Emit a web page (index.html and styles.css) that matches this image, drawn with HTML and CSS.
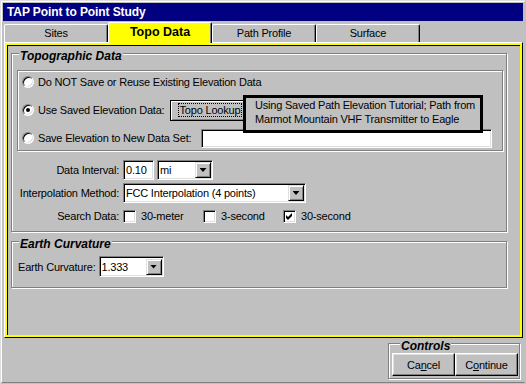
FILE: index.html
```html
<!DOCTYPE html>
<html lang="en">
<head>
  <meta charset="UTF-8">
  <meta name="viewport" content="width=device-width, initial-scale=1.0">
  <title>TAP Point to Point Study</title>
  <link rel="stylesheet" href="styles.css">
</head>
<body>
  <div class="window">
    <div class="window-in">
      <div class="titlebar">TAP Point to Point Study</div>

      <div class="tabs">
        <div class="tab">Sites</div>
        <div class="tab active">Topo Data</div>
        <div class="tab">Path Profile</div>
        <div class="tab">Surface</div>
      </div>

      <div class="panel">
        <div class="panel-body">
          <div class="group topo">
            <div class="group-title">Topographic Data</div>

            <div class="group options">
              <div class="option">
                <span class="radio"></span>
                <span>Do NOT Save or Reuse Existing Elevation Data</span>
              </div>
              <div class="option">
                <span class="radio checked"></span>
                <span>Use Saved Elevation Data:</span>
                <button class="btn default lookup"><span class="focus">Topo Lookup</span></button>
              </div>
              <div class="option">
                <span class="radio"></span>
                <span>Save Elevation to New Data Set:</span>
                <span class="field dataset"></span>
              </div>
              <div class="note">Using Saved Path Elevation Tutorial; Path from<br>Marmot Mountain VHF Transmitter to Eagle</div>
            </div>

            <div class="settings">
              <label>Data Interval:</label>
              <div class="row">
                <span class="field interval"><span class="text">0.10</span></span>
                <span class="field unit"><span class="text">mi</span><span class="drop"></span></span>
              </div>

              <label>Interpolation Method:</label>
              <span class="field method"><span class="text">FCC Interpolation (4 points)</span><span class="drop"></span></span>

              <label>Search Data:</label>
              <div class="row checks">
                <span class="check"><span class="box"></span>30-meter</span>
                <span class="check"><span class="box"></span>3-second</span>
                <span class="check"><span class="box"><svg width="7" height="7" viewBox="0 0 7 7"><polygon points="0,2 2,4 6,0 6,3 2,7 0,5" fill="#000"/></svg></span>30-second</span>
              </div>
            </div>
          </div>

          <div class="group earth">
            <div class="group-title">Earth Curvature</div>
            <div class="curve-row">
              <label>Earth Curvature:</label>
              <span class="field curve"><span class="text">1.333</span><span class="drop"></span></span>
            </div>
          </div>
        </div>
      </div>

      <div class="footer">
        <div class="group controls">
          <div class="group-title">Controls</div>
          <div class="buttons">
            <button class="btn">Ca<u>n</u>cel</button>
            <button class="btn">C<u>o</u>ntinue</button>
          </div>
        </div>
      </div>
    </div>
  </div>
</body>
</html>
```

FILE: styles.css
```css
body {
  margin: 0;
  background: #c0c0c0;
  font-family: "Liberation Sans", Arial, sans-serif;
  font-size: 11px;
  letter-spacing: -0.2px;
  color: #000;
}
.window {
  width: 526px;
  height: 384px;
  box-sizing: border-box;
  border: 1px solid;
  border-color: #dfdfdf #c0c0c0 #c0c0c0 #dfdfdf;
}
.window-in {
  height: 100%;
  box-sizing: border-box;
  border: 1px solid;
  border-color: #fff #c0c0c0 #808080 #fff;
  padding: 1px;
}
.titlebar {
  height: 18px;
  line-height: 18px;
  padding-left: 4px;
  background: #000080;
  color: #fff;
  font-weight: bold;
  font-size: 12px;
  letter-spacing: -0.1px;
}

/* tabs */
.tabs {
  display: flex;
  align-items: flex-end;
  height: 20px;
  margin-top: 1px;
  padding-left: 1px;
}
.tab {
  width: 104px;
  height: 18px;
  box-sizing: border-box;
  border-top: 1px solid #fff;
  border-left: 1px solid #fff;
  border-right: 1px solid #000;
  border-radius: 2px 2px 0 0;
  box-shadow: inset -1px 0 #808080;
  text-align: center;
  line-height: 17px;
}
.tab.active {
  position: relative;
  height: 21px;
  margin-bottom: -1px;
  background: #ff0;
  font-weight: bold;
  font-size: 12.5px;
  letter-spacing: 0;
  line-height: 19px;
}

/* panel */
.panel {
  height: 296px;
  box-sizing: border-box;
  margin-left: 1px;
  border: 1px solid;
  border-color: #fff #000 #000 #fff;
}
.panel-body {
  height: 100%;
  box-sizing: border-box;
  border: 2px solid #ff0;
  box-shadow: inset 1px 1px #000;
  padding: 8px 13px 0 4px;
}

/* group boxes */
.group {
  border: 1px solid #808080;
  box-shadow: inset 1px 1px #fff, 1px 1px #fff;
}
.group-title {
  width: fit-content;
  margin: -5px 0 0 7px;
  padding: 0 1px;
  background: #c0c0c0;
  font-style: italic;
  font-weight: bold;
  font-size: 12px;
  line-height: 14px;
  letter-spacing: 0;
}
.options {
  position: relative;
  display: flex;
  flex-direction: column;
  gap: 10px;
  margin: 7px 3px 0 5px;
  padding: 2px 0 3px 4px;
}
.option {
  display: flex;
  align-items: center;
  gap: 4px;
  height: 18px;
  white-space: nowrap;
}
.note {
  position: absolute;
  left: 225px;
  top: 24px;
  width: 240px;
  height: 38px;
  box-sizing: border-box;
  border: 3px solid #000;
  background: #c0c0c0;
  padding-left: 9px;
  line-height: 14px;
}

/* controls */
.radio {
  position: relative;
  flex: none;
  width: 12px;
  height: 12px;
  box-sizing: border-box;
  border-radius: 50%;
  background: #fff;
  border: 1px solid;
  border-color: #808080 #fff #fff #808080;
  box-shadow: inset 1px 1px #000, inset -1px -1px #dfdfdf;
}
.radio.checked::after {
  content: "";
  position: absolute;
  left: 3px;
  top: 3px;
  width: 4px;
  height: 4px;
  border-radius: 50%;
  background: #000;
}
.btn {
  box-sizing: border-box;
  padding: 0;
  font: inherit;
  letter-spacing: inherit;
  color: #000;
  background: #c0c0c0;
  border: 1px solid;
  border-color: #fff #000 #000 #fff;
  box-shadow: inset -1px -1px #808080, inset 1px 1px #dfdfdf;
}
.btn.default {
  border-color: #000;
  box-shadow: inset 1px 1px #fff, inset -1px -1px #808080;
}
.lookup {
  width: 79px;
  height: 21px;
  margin-left: 2px;
}
.focus {
  border: 1px dotted #000;
  padding: 0 1px;
}
.field {
  display: flex;
  align-items: center;
  box-sizing: border-box;
  height: 20px;
  padding: 1px;
  background: #fff;
  border: 1px solid;
  border-color: #808080 #fff #fff #808080;
  box-shadow: inset 1px 1px #000, inset -1px -1px #dfdfdf;
  line-height: 16px;
  white-space: nowrap;
}
.field .text {
  flex: 1;
  padding-left: 1px;
}
.drop {
  display: flex;
  align-items: center;
  justify-content: center;
  flex: none;
  width: 16px;
  height: 16px;
  box-sizing: border-box;
  background: #c0c0c0;
  border: 1px solid;
  border-color: #dfdfdf #000 #000 #dfdfdf;
  box-shadow: inset 1px 1px #fff, inset -1px -1px #808080;
}
.drop::after {
  content: "";
  width: 7px;
  height: 4px;
  background: #000;
  clip-path: polygon(0 0, 100% 0, 50% 100%);
}
.dataset {
  width: 291px;
  height: 19px;
  margin-left: 6px;
}
.interval {
  width: 31px;
}
.unit {
  width: 56px;
}
.method {
  width: 183px;
}
.curve {
  width: 65px;
  height: 21px;
}

/* settings grid */
.settings {
  display: grid;
  grid-template-columns: 107px auto;
  grid-auto-rows: 20px;
  column-gap: 4px;
  row-gap: 3px;
  align-items: center;
  justify-items: start;
  margin-top: 9px;
  padding-bottom: 5px;
}
.settings label {
  justify-self: end;
  white-space: nowrap;
}
.row {
  display: flex;
  align-items: center;
  gap: 3px;
}
.checks {
  gap: 0;
}
.check {
  display: flex;
  align-items: center;
  gap: 5px;
  width: 80px;
}
.check .box {
  display: flex;
  align-items: center;
  justify-content: center;
  flex: none;
  width: 13px;
  height: 13px;
  box-sizing: border-box;
  background: #fff;
  border: 1px solid;
  border-color: #808080 #fff #fff #808080;
  box-shadow: inset 1px 1px #000, inset -1px -1px #dfdfdf;
}
.earth {
  margin-top: 9px;
  padding-bottom: 10px;
}
.curve-row {
  display: flex;
  align-items: center;
  gap: 3px;
  height: 21px;
  margin-top: 5px;
  padding-left: 6px;
}

/* footer */
.footer {
  display: flex;
  justify-content: flex-end;
  padding: 5px 3px 0 0;
}
.controls {
  padding: 0 1px 2px 3px;
}
.controls .group-title {
  margin-left: 8px;
}
.buttons {
  display: flex;
}
.buttons .btn {
  width: 63px;
  height: 23px;
}
```
